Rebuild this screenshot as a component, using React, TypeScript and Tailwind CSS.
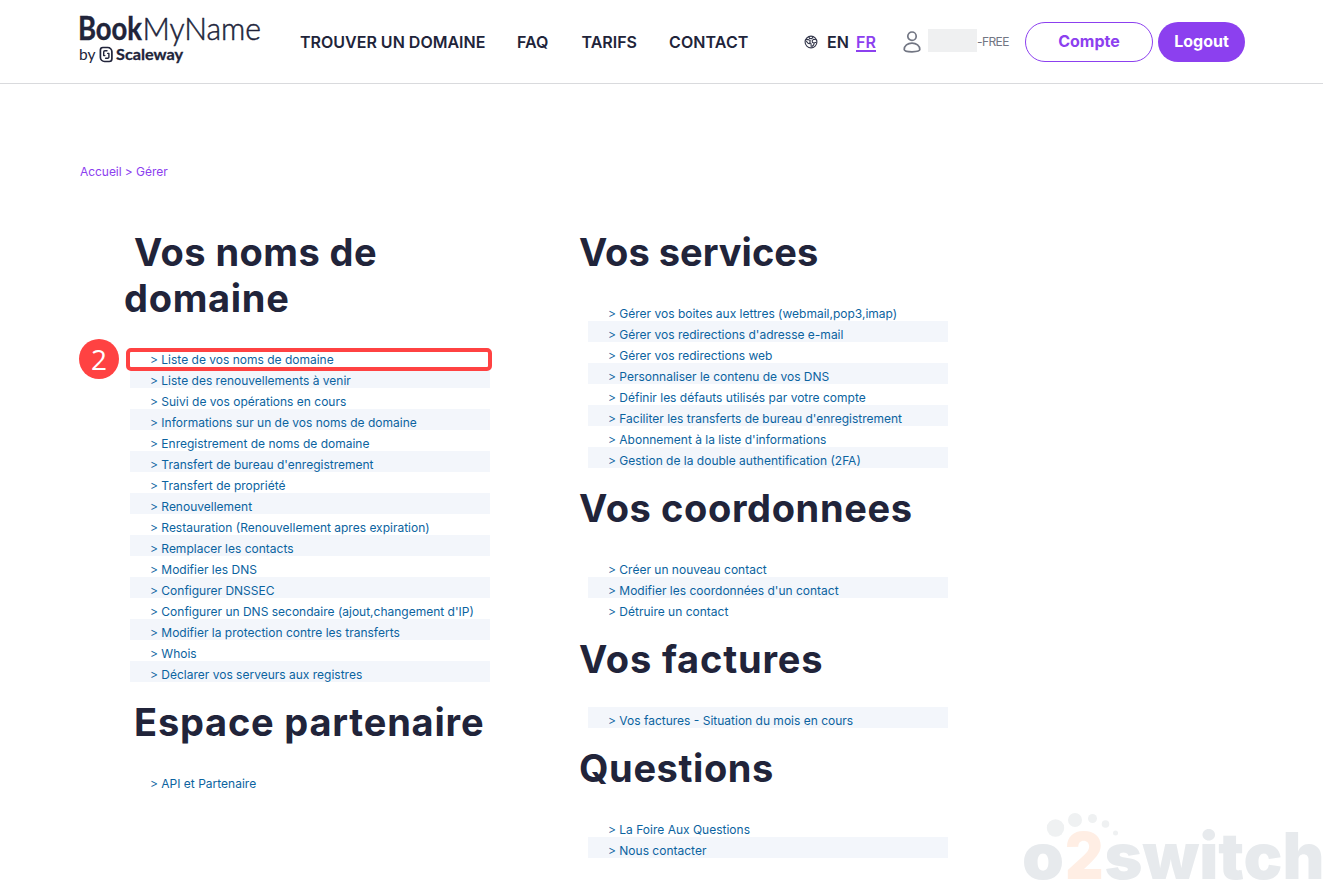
import { clsx } from "clsx";

type Section = {
  title: string[];
  tracking: string[];
  links: string[];
  firstShaded?: boolean;
  highlighted?: boolean;
};

const leftSections: Section[] = [
  {
    title: ["Vos noms de", "domaine"],
    tracking: ["tracking-[0.45px]", "tracking-[0.7px]"],
    highlighted: true,
    links: [
      "Liste de vos noms de domaine",
      "Liste des renouvellements à venir",
      "Suivi de vos opérations en cours",
      "Informations sur un de vos noms de domaine",
      "Enregistrement de noms de domaine",
      "Transfert de bureau d'enregistrement",
      "Transfert de propriété",
      "Renouvellement",
      "Restauration (Renouvellement apres expiration)",
      "Remplacer les contacts",
      "Modifier les DNS",
      "Configurer DNSSEC",
      "Configurer un DNS secondaire (ajout,changement d'IP)",
      "Modifier la protection contre les transferts",
      "Whois",
      "Déclarer vos serveurs aux registres",
    ],
  },
  { title: ["Espace partenaire"], tracking: ["tracking-[0.8px]"], links: ["API et Partenaire"] },
];

const rightSections: Section[] = [
  {
    title: ["Vos services"],
    tracking: ["tracking-[0.02px]"],
    links: [
      "Gérer vos boites aux lettres (webmail,pop3,imap)",
      "Gérer vos redirections d'adresse e-mail",
      "Gérer vos redirections web",
      "Personnaliser le contenu de vos DNS",
      "Définir les défauts utilisés par votre compte",
      "Faciliter les transferts de bureau d'enregistrement",
      "Abonnement à la liste d'informations",
      "Gestion de la double authentification (2FA)",
    ],
  },
  {
    title: ["Vos coordonnees"],
    tracking: ["tracking-[0.62px]"],
    links: ["Créer un nouveau contact", "Modifier les coordonnées d'un contact", "Détruire un contact"],
  },
  {
    title: ["Vos factures"],
    tracking: ["tracking-[0.82px]"],
    firstShaded: true,
    links: ["Vos factures - Situation du mois en cours"],
  },
  {
    title: ["Questions"],
    tracking: ["tracking-[0.6px]"],
    links: ["La Foire Aux Questions", "Nous contacter"],
  },
];

function Logo() {
  return (
    <svg width="184" height="60" viewBox="0 -4 184 60" className="block overflow-visible" fill="#21243a">
      <text x="-1" y="28" fontFamily="Lato" fontWeight="700" fontSize="32" stroke="#21243a" strokeWidth="0.4" textLength="64" lengthAdjust="spacingAndGlyphs">Book</text>
      <text x="63.5" y="28" fontFamily="Lato" fontWeight="300" fontSize="32" stroke="#21243a" strokeWidth="0.5" textLength="118.5" lengthAdjust="spacingAndGlyphs">MyName</text>
      <text x="0" y="48" fontFamily="Lato" fontWeight="400" fontSize="15.5" textLength="16.5" lengthAdjust="spacingAndGlyphs">by</text>
      <g fill="none" stroke="#21243a" strokeLinejoin="round" strokeLinecap="round">
        <path strokeWidth="1.7" d="M23.9 35.5h4.8a4.2 4.2 0 0 1 4.2 4.2v7.1a2.7 2.7 0 0 1-2.7 2.7h-4.6a4.2 4.2 0 0 1-4.2-4.2v-7.3a2.5 2.5 0 0 1 2.5-2.5z" />
        <path strokeWidth="1.4" d="M28 38.8h-2.1a1.2 1.2 0 0 0-1.2 1.2v3.6h1.2M26.6 46.2h2.1a1.2 1.2 0 0 0 1.2-1.2v-3.6h-1.2" />
      </g>
      <text x="37" y="48" fontFamily="Lato" fontWeight="700" fontSize="15.5" stroke="#21243a" strokeWidth="0.3" textLength="67" lengthAdjust="spacingAndGlyphs">Scaleway</text>
    </svg>
  );
}

function Globe() {
  return (
    <svg width="14" height="14" viewBox="0 0 14 14" fill="none" stroke="#34374b" strokeWidth="1.1" strokeLinejoin="round">
      <circle cx="7" cy="7" r="5.9" />
      <path d="M1.8 4.6 4 4.4l2.2 1.2-.4 2 1.2 1 .2 3M2.2 6.2l2 2.2 1.8.4M4.8 1.8l.8 1.6 2.2.2 1.2-1.4M12.2 4.8 9.8 4.2 8.2 5.6l.2 1.8 1.8.6-.6 2-1.8 1.6M12.6 7.2l-2.2.6" />
    </svg>
  );
}

function User() {
  return (
    <svg width="18" height="22" viewBox="0 0 18 22" fill="none" stroke="#727683" strokeWidth="1.7" strokeLinejoin="round">
      <circle cx="9" cy="5.2" r="4.2" />
      <path d="M1.2 18.6c0-3.8 3.4-6.5 7.8-6.5s7.8 2.7 7.8 6.5c0 1-2 2.2-7.8 2.2s-7.8-1.2-7.8-2.2z" />
    </svg>
  );
}

function Watermark() {
  return (
    <svg width="313" height="74" viewBox="0 0 313 74" className="absolute right-0 bottom-0" fill="#e7eaed">
      <g fill="#eff1f2">
        <circle cx="45.5" cy="22" r="8.7" />
        <circle cx="65" cy="14" r="7" />
        <circle cx="82.5" cy="12.5" r="4.5" />
        <circle cx="95.5" cy="18" r="3.8" />
        <circle cx="105.5" cy="27" r="2.5" />
      </g>
      <g fontFamily="Inter" fontWeight="900" fontSize="64">
        <text x="12" y="73" textLength="42" lengthAdjust="spacingAndGlyphs">o</text>
        <text x="55" y="73" fill="#ffeee4" textLength="38.5" lengthAdjust="spacingAndGlyphs">2</text>
        <text x="94.5" y="73" textLength="220" lengthAdjust="spacingAndGlyphs">switch</text>
      </g>
    </svg>
  );
}

function SectionBlock({ section, indent }: { section: Section; indent?: boolean }) {
  return (
    <section>
      <h2 className={clsx("pt-[17px] pb-[25px] text-[38px] leading-[46px] font-bold text-[#21243a]", indent ? "-ml-[6px]" : "-ml-[9px]")}>
        {section.title.map((line, i) => (
          <span key={line} className={clsx("block whitespace-nowrap", section.tracking[i], indent && i === 0 && "pl-[10px]")}>
            {line}
          </span>
        ))}
      </h2>
      <ul className="w-[360px]">
        {section.links.map((link, i) => {
          const shaded = (i % 2 === 1) !== Boolean(section.firstShaded);
          return (
            <li key={link} className={clsx("relative h-[21px] pt-[6px] pl-5 text-xs leading-4 text-[#0b63a0]", shaded && "bg-[#f3f6fb]")}>
              <a className="whitespace-nowrap">&gt; {link}</a>
              {section.highlighted && i === 0 && (
                <>
                  <span className="absolute top-[2px] -left-1 z-10 h-[23px] w-[366px] rounded-[5px] border-4 border-[#ff4242]" />
                  <span className="absolute -top-[7px] -left-[51px] flex size-10 items-center justify-center rounded-full bg-[#ff4242] font-['Open_Sans'] text-[28px] leading-none font-medium text-white">
                    2
                  </span>
                </>
              )}
            </li>
          );
        })}
      </ul>
    </section>
  );
}

export default function App() {
  return (
    <div className="relative h-[880px] w-[1323px] overflow-hidden bg-white font-['Inter',sans-serif] text-[#21243a]">
      <header className="flex h-[84px] items-start border-b border-[#d9dadd] pl-[79px]">
        <div className="w-[221px] pt-2">
          <Logo />
        </div>
        <nav className="flex h-[84px] items-center gap-8 text-base font-semibold whitespace-nowrap">
          <a className="w-[185px]">TROUVER UN DOMAINE</a>
          <a className="w-[32.5px]">FAQ</a>
          <a className="w-[55.5px]">TARIFS</a>
          <a className="w-[80px] tracking-[0.1px]">CONTACT</a>
        </nav>
        <div className="ml-[55px] flex h-[84px] items-center text-base font-semibold">
          <Globe />
          <a className="ml-[9px] w-[29px]">EN</a>
          <a className="h-[20px] w-[20px] border-b-2 border-[#8c40ef] leading-[20px] text-[#8c40ef]">FR</a>
        </div>
        <div className="ml-[27px] flex h-[84px] items-center">
          <User />
          <span className="-mt-[3px] ml-[7px] h-[23px] w-[49px] bg-[#eff0f1]" />
          <span className="w-[32.3px] text-xs tracking-[-0.6px] text-[#727683]">-FREE</span>
        </div>
        <div className="ml-[15.7px] flex gap-[5px] pt-[22px] text-base">
          <button className="h-10 w-32 rounded-full border border-[#8c40ef] pb-[2px] font-bold text-[#8c40ef]">Compte</button>
          <button className="h-10 w-[87px] rounded-full bg-[#8c40ef] pb-[2px] font-bold text-white">Logout</button>
        </div>
      </header>
      <div className="pt-[80px] pl-20 text-xs leading-4 tracking-[-0.05px] text-[#8c40ef]">Accueil &gt; Gérer</div>
      <main className="flex pt-[32px] pl-[130px]">
        <div className="w-[458px]">
          {leftSections.map((s) => (
            <SectionBlock key={s.title[0]} section={s} indent />
          ))}
        </div>
        <div>
          {rightSections.map((s) => (
            <SectionBlock key={s.title[0]} section={s} />
          ))}
        </div>
      </main>
      <Watermark />
    </div>
  );
}
